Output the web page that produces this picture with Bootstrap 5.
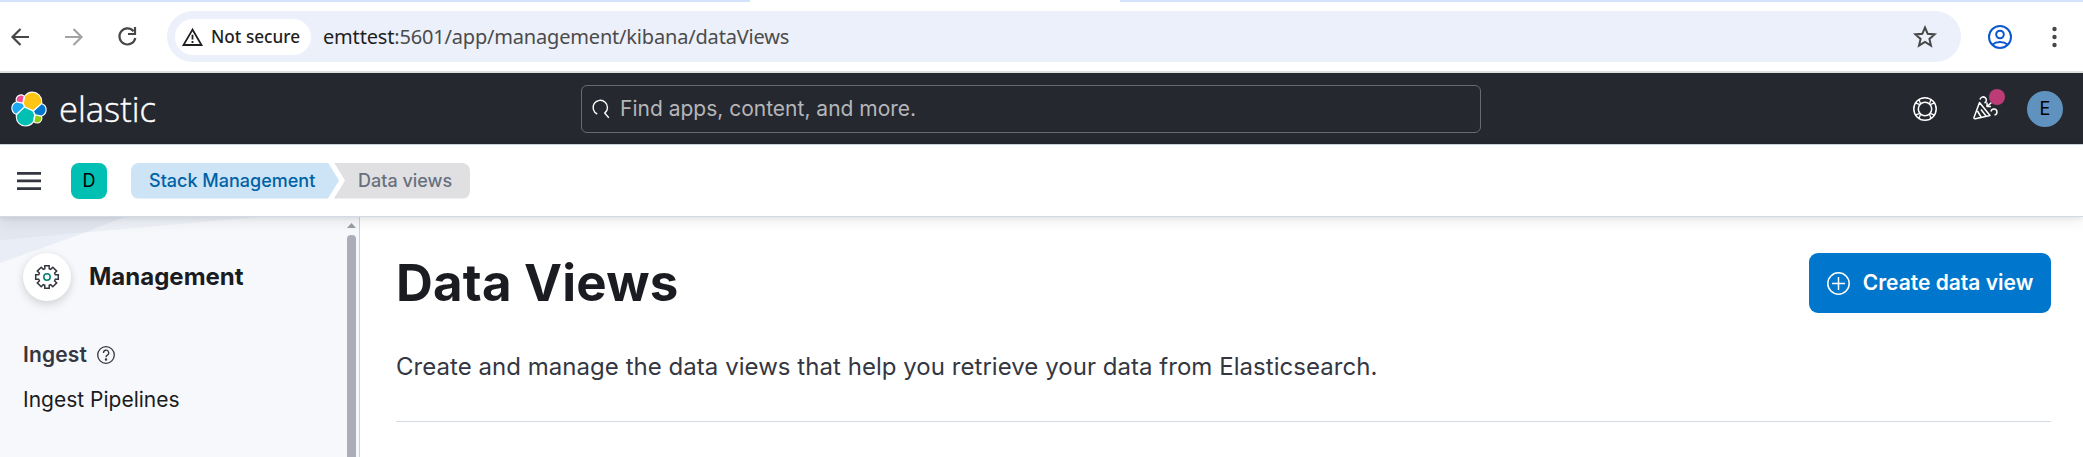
<!DOCTYPE html>
<html lang="en">
<head>
<meta charset="utf-8">
<meta name="viewport" content="width=device-width, initial-scale=1">
<title>Data Views - Elastic</title>
<link href="https://cdn.jsdelivr.net/npm/bootstrap@5.3.0/dist/css/bootstrap.min.css" rel="stylesheet">
<style>
  body { font-family: Inter, "Liberation Sans", sans-serif; color: #343741; height: 457px; overflow: hidden; background: #fff; }
  svg { display: block; flex: none; overflow: visible; }
  .tabstrip, .toolbar, .topbar, .crumbbar { flex: none; }
  .tabstrip { height: 2px; background: #d3e3fd; }
  .active-tab { margin-left: 750px; width: 370px; height: 2px; background: #fff; }
  .toolbar { height: 71px; border-bottom: 2px solid #dfe1df; font-family: "Noto Sans", "Open Sans", sans-serif; padding: 0 26px 0 11px; }
  .forward, .reload { margin-left: 35px; }
  .omnibox { height: 51px; margin: 0 22px 0 30px; background: #ecf0fa; border-radius: 26px; padding: 0 24px 0 8px; }
  .chip { height: 36px; width: 136px; border-radius: 18px; background: #fff; color: #1f1f1f; font-size: 17.2px; font-weight: 500; padding-left: 7px; gap: 8px; white-space: nowrap; }
  .url { font-size: 20px; letter-spacing: -.18px; color: #4b4b4b; margin-left: 12px; white-space: nowrap; }
  .url b { font-weight: 400; color: #1f1f1f; }
  .profile { margin-left: 5px; }
  .kebab { margin-left: 40px; }
  .topbar { height: 72px; background: #25282f; border-bottom: 1px solid #d3dae6; padding: 0 20px 0 11px; }
  .brand { width: 570px; }
  .finder { width: 900px; height: 48px; border: 1px solid #686a70; border-radius: 6px; color: #b5b6b9; font-size: 21px; padding-left: 10px; gap: 10px; }
  .news { margin: 0 30px 0 36px; }
  .avatar { width: 36px; height: 36px; border-radius: 50%; background: #6092c0; color: #000; font-size: 18px; }
  .dot { position: absolute; right: -8px; top: -8px; width: 16px; height: 16px; border-radius: 50%; background: #bd3b77; }
  .crumbbar { height: 72px; border-bottom: 1px solid #d3dae6; padding-left: 17px; box-shadow: 0 1px 5px rgba(0,0,0,.08), 0 4px 14px rgba(0,0,0,.08); position: relative; z-index: 2; background: #fff; }
  .space { width: 36px; height: 36px; border-radius: 8px; background: #00bfb3; color: #000; font-size: 18px; margin-left: 30px; }
  .crumb { height: 36px; font-size: 18px; font-weight: 500; line-height: 35px; white-space: nowrap; }
  .crumb-a { width: 208px; margin-left: 24px; padding-left: 18px; color: #0061a6; background: #cce4f5; border-radius: 8px 0 0 8px; clip-path: polygon(0 0, 197px 0, 100% 50%, 197px 100%, 0 100%); }
  .crumb-b { width: 136px; margin-left: -5px; padding-left: 24px; color: #69707d; background: #e0e0e2; border-radius: 0 8px 8px 0; clip-path: polygon(0 0, 100% 0, 100% 100%, 0 100%, 11px 50%); }
  .page-body { min-height: 0; }
  .sidebar { width: 360px; background: #f7f8fc; border-right: 1px solid #ccd0da; overflow: hidden; position: relative; }
  .swoosh { position: absolute; left: 0; top: 0; }
  .sidenav { position: relative; padding: 36px 0 0 23px; flex: 1; }
  .gear { width: 48px; height: 48px; border-radius: 50%; background: #fff; box-shadow: 0 2px 8px rgba(0,0,0,.12), 0 6px 12px rgba(0,0,0,.05); }
  .side-title { font-size: 24px; font-weight: 700; color: #1a1c21; margin-left: 18px; }
  .group { font-size: 21px; font-weight: 600; line-height: 30px; margin-top: 39px; gap: 10px; letter-spacing: .15px; }
  .item { font-size: 21px; line-height: 30px; color: #1a1c21; margin-top: 15px; }
  .scroller { width: 12px; padding-top: 6px; }
  .thumb { width: 9px; height: 260px; margin-top: 7px; background: #abaeb8; border-radius: 4px 4px 0 0; }
  main { padding: 36px 32px 0 36px; }
  h1 { font-size: 51px; font-weight: 700; line-height: 60px; color: #1a1c21; letter-spacing: .2px; }
  .create { width: 242px; height: 60px; background: #0077cc; color: #fff; border-radius: 9px; font-size: 21px; font-weight: 600; gap: 13px; white-space: nowrap; }
  .lede { font-size: 24px; line-height: 36px; letter-spacing: .04px; margin: 36px 0 0; }
  .rule { height: 1px; background: #d3dae6; margin-top: 36px; }
</style>
</head>
<body class="d-flex flex-column">
<div class="tabstrip"><div class="active-tab"></div></div>
<div class="toolbar d-flex align-items-center">
  <svg width="18" height="18" viewBox="0 0 18 18" fill="none" stroke="#474747" stroke-width="2.2"><path d="M18 9H2M9.500 1 1.500 9l8 8"/></svg>
  <svg class="forward" width="19" height="18" viewBox="0 0 19 18" fill="none" stroke="#a3a3a3" stroke-width="2.2"><path d="M1 9h16M9.500 1l8 8-8 8"/></svg>
  <svg class="reload" width="19" height="19" viewBox="0 0 19 19" fill="none" stroke="#474747" stroke-width="2.2"><path d="M15.500 4.200A8 8 0 1 0 17.300 11M17 0v7h-7"/></svg>
  <div class="omnibox d-flex align-items-center flex-grow-1">
    <div class="chip d-flex align-items-center">
      <svg width="21" height="18" viewBox="0 0 21 18" fill="none" stroke="#1f1f1f" stroke-width="1.800"><path d="M10.500 1.600 1.500 17h18zM10.500 6.800v4.800M10.500 13v2"/></svg>
      <span>Not secure</span>
    </div>
    <div class="url"><b>emttest</b>:5601/app/management/kibana/dataViews</div>
    <svg class="ms-auto" width="24" height="23" viewBox="0 0 24 23" fill="none" stroke="#474747" stroke-width="2"><path d="m12 2.500 2.700 6.300 6.900.6-5.200 4.500 1.600 6.700-6-3.600-6 3.600 1.600-6.700-5.200-4.500 6.900-.6z"/></svg>
  </div>
  <svg class="profile" width="24" height="24" viewBox="0 0 24 24" fill="none" stroke="#0b57d0" stroke-width="2"><circle cx="12" cy="12" r="11"/><circle cx="12" cy="9.500" r="3.800"/><path d="M4.500 19.500c4-3.500 11-3.500 15 0"/></svg>
  <svg class="kebab" width="5" height="22" viewBox="0 0 5 22" fill="#474747"><circle cx="2.500" cy="3" r="2.200"/><circle cx="2.500" cy="11" r="2.200"/><circle cx="2.500" cy="19" r="2.200"/></svg>
</div>

<header class="topbar d-flex align-items-center">
  <div class="brand d-flex align-items-center">
    <svg width="36" height="36" viewBox="0 0 32 32">
      <defs><g id="cluster">
        <path fill="#fec514" d="m12.580 13.787 7.002 3.211 7.066-6.213a7.850 7.850 0 0 0 .152-1.557c0-4.287-3.478-7.775-7.753-7.775-2.558 0-4.947 1.268-6.395 3.395l-1.176 6.114z"/>
        <path fill="#00bfb3" d="M5.333 21.228a8 8 0 0 0-.153 1.580c0 4.301 3.488 7.800 7.776 7.800 2.579 0 4.994-1.280 6.443-3.420l1.166-6.094-1.556-2.985-7.031-3.213z"/>
        <path fill="#f04e98" d="m5.288 9.067 4.800 1.136 1.051-5.473a3.790 3.790 0 0 0-6.075 3.030c0 .45.076.893.224 1.307z"/>
        <path fill="#1ba9f5" d="M4.871 10.214c-2.140.711-3.622 2.770-3.622 5.020 0 2.190 1.355 4.148 3.388 4.924l6.733-6.100-1.236-2.650z"/>
        <path fill="#93c90e" d="M20.870 27.186a3.770 3.770 0 0 0 2.286.785 3.790 3.790 0 0 0 3.783-3.796c0-.456-.079-.898-.226-1.306l-4.796-1.125z"/>
        <path fill="#07c" d="m21.846 20.563 5.280 1.236c2.148-.712 3.631-2.770 3.631-5.022a5.277 5.277 0 0 0-3.388-4.918l-6.907 6.064z"/>
      </g></defs>
      <use href="#cluster" stroke="#fff" stroke-width="2"/><use href="#cluster"/>
    </svg>
    <svg class="ms-2" width="104" height="40"><text x="4" y="32.500" textLength="97" lengthAdjust="spacingAndGlyphs" font-family="Open Sans, sans-serif" font-weight="300" font-size="35" fill="#fff" stroke="#fff" stroke-width=".4">elastic</text></svg>
  </div>
  <div class="finder d-flex align-items-center">
    <svg width="18" height="19" viewBox="0 0 18 19" fill="none" stroke="#fff" stroke-width="1.400"><path d="M5.200 15A7.200 7.200 0 1 1 12.800 14.100l4 4.600"/></svg>
    <span>Find apps, content, and more.</span>
  </div>
  <div class="d-flex align-items-center ms-auto">
    <svg width="24" height="24" viewBox="0 0 24 24" fill="none" stroke="#fff" stroke-width="1.500"><circle cx="12" cy="12" r="11.200"/><circle cx="12" cy="12" r="6.700"/><path stroke-width="1.300" d="m3 6.100 3.900 1.600M6.100 3l1.600 3.900M21 6.100l-3.900 1.600M17.900 3l-1.600 3.900M3 17.900l3.900-1.600M6.100 21l1.600-3.900M21 17.900l-3.900-1.600M17.900 21l-1.600-3.900"/></svg>
    <div class="news position-relative">
      <svg width="24" height="23" viewBox="0 0 24 23" fill="none" stroke="#fff" stroke-width="1.500" stroke-linejoin="round"><path d="M6.500 5.500 1 20.500q-.3 1.500 1.300 1.300L17 18.500zM4.500 14l3.500 6M8 12.500l5 6.500M7 2.500A3.200 3.200 0 1 1 11.500 6M14 5.500v4h4M14 9.500l4.500-4M18 14.500a3 3 0 1 1 3.500 3.500"/></svg>
      <span class="dot"></span>
    </div>
    <div class="avatar d-flex align-items-center justify-content-center">E</div>
  </div>
</header>

<nav class="crumbbar d-flex align-items-center">
  <svg width="24" height="18" viewBox="0 0 24 18" fill="#343741"><path d="M0 0h24v2.700H0zM0 7.600h24v2.700H0zM0 15.200h24v2.700H0z"/></svg>
  <div class="space d-flex align-items-center justify-content-center">D</div>
  <div class="crumb crumb-a">Stack Management</div>
  <div class="crumb crumb-b">Data views</div>
</nav>

<div class="page-body d-flex flex-grow-1">
  <aside class="sidebar d-flex">
    <svg class="swoosh" width="260" height="50" viewBox="0 0 260 50"><path fill="#edf0f6" d="M0 0h258L0 23z"/><path fill="#e9edf5" d="M0 0h124L84 16 0 46z"/><path fill="#e1e6ef" d="M0 0h124L86 15.300 0 23z"/></svg>
    <div class="sidenav">
      <div class="d-flex align-items-center">
        <div class="gear d-flex align-items-center justify-content-center">
          <svg width="24" height="24" viewBox="0 0 24 24" fill="none" stroke="#343741" stroke-width="1.500"><path d="M9.800.7h4.400v3l1.500.6 2.100-2.100 3.900 3.900-2.100 2.100.7 1.600h3v4.400h-3l-.7 1.600 2.100 2.100-3.900 3.900-2.100-2.100-1.500.6v3H9.800v-3l-1.500-.6-2.100 2.100-3.900-3.900 2.100-2.100-.7-1.600h-3V9.800h3l.7-1.600-2.100-2.100 3.900-3.900 2.100 2.100 1.500-.6z"/><circle cx="12" cy="12" r="3.200" stroke="#017d73"/></svg>
        </div>
        <div class="side-title">Management</div>
      </div>
      <div class="group d-flex align-items-center">Ingest
        <svg width="18" height="18" viewBox="0 0 18 18" fill="none" stroke="#343741" stroke-width="1.300"><circle cx="9" cy="9" r="8.300"/><path d="M6.500 7a2.600 2.600 0 1 1 3.800 2.100Q9 9.800 9 11.200"/><circle cx="9" cy="13.400" r=".6" fill="#343741"/></svg>
      </div>
      <div class="item">Ingest Pipelines</div>
    </div>
    <div class="scroller"><svg width="9" height="5" viewBox="0 0 9 5"><path fill="#9a9ca3" d="M4.500 0 9 5H0z"/></svg><div class="thumb"></div></div>
  </aside>
  <main class="flex-grow-1">
    <div class="d-flex justify-content-between">
      <h1 class="m-0">Data Views</h1>
      <button class="create btn border-0 p-0 d-flex align-items-center justify-content-center">
        <svg width="23" height="23" viewBox="0 0 23 23" fill="none" stroke="#fff" stroke-width="1.500"><circle cx="11.500" cy="11.500" r="10.700"/><path d="M11.500 5v13M5 11.500h13"/></svg>
        Create data view
      </button>
    </div>
    <p class="lede">Create and manage the data views that help you retrieve your data from Elasticsearch.</p>
    <div class="rule"></div>
  </main>
</div>
<script src="https://cdn.jsdelivr.net/npm/bootstrap@5.3.0/dist/js/bootstrap.bundle.min.js"></script>
</body>
</html>
